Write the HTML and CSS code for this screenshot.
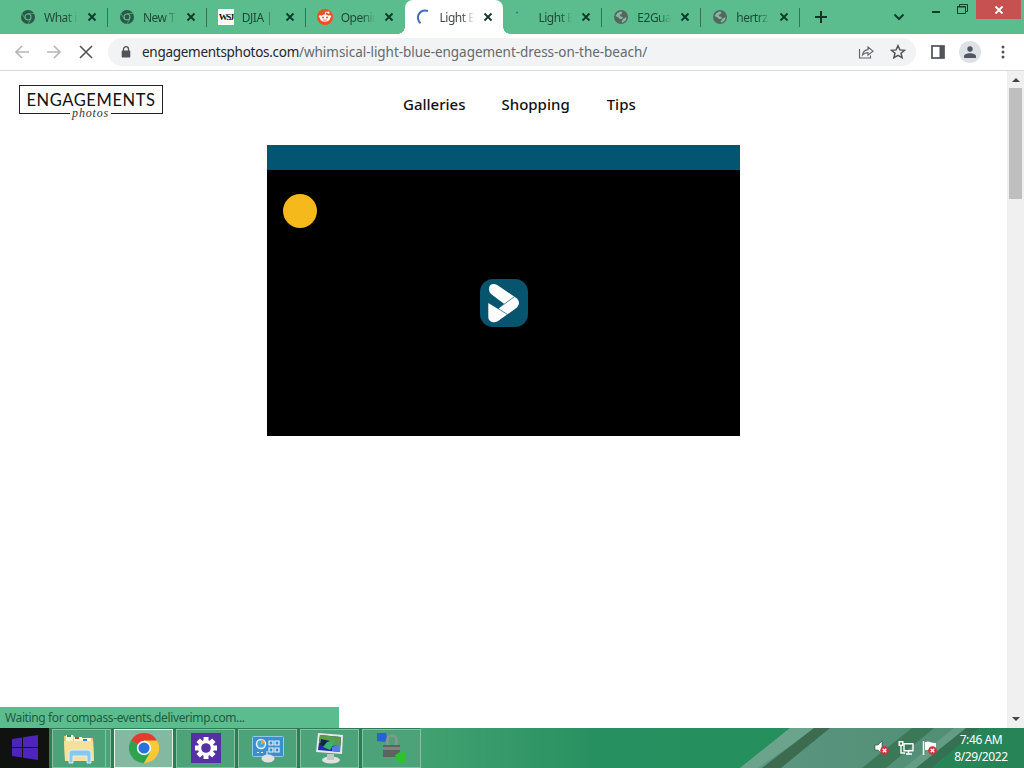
FILE: index.html
```
<!DOCTYPE html>
<html lang="en">
<head>
  <meta charset="UTF-8" />
  <meta name="viewport" content="width=device-width, initial-scale=1.0"/>
  <title>Light Blue Engagement Dress on the Beach</title>
  <link rel="stylesheet" href="styles.css">
</head>
<body>
  <svg class="defs" width="0" height="0">
    <symbol id="close" viewBox="0 0 10 10"><path d="M1.5 1.5l7 7M8.5 1.5l-7 7" stroke="currentColor" stroke-width="1.8"/></symbol>
    <symbol id="chromeGray" viewBox="0 0 16 16">
      <circle cx="8" cy="8" r="7" fill="#2c5746"/>
      <path d="M8 4.6h6.2M5 9.7L2 4.6M11 9.7L8 15" stroke="#5bbd8e" stroke-width=".7"/>
      <circle cx="8" cy="8" r="3.5" fill="#5bbd8e"/>
      <circle cx="8" cy="8" r="2.4" fill="#2c5746"/>
    </symbol>
    <symbol id="globe" viewBox="0 0 16 16">
      <circle cx="8" cy="8" r="7" fill="#55665f"/>
      <path d="M2.500 7l2-3 3-1.500 2 .5-1 2-2 1 1 1.500 2.500.5-1 2H7L5.500 8.500zM10 10l3.500-2-.5 3-3 2.500-1.500-.5z" fill="#86b8a0"/>
    </symbol>
    <symbol id="badge" viewBox="0 0 10 10"><circle cx="5" cy="5" r="4.8" fill="#d3303b"/><path d="M3 3l4 4M7 3L3 7" stroke="#fff" stroke-width="1.4"/></symbol>
  </svg>

  <header class="tab-strip">
    <div class="tabs">
      <div class="tab"><svg class="favicon"><use href="#chromeGray"/></svg><span class="title">What i</span><svg class="x"><use href="#close"/></svg></div>
      <div class="tab"><svg class="favicon"><use href="#chromeGray"/></svg><span class="title">New T</span><svg class="x"><use href="#close"/></svg></div>
      <div class="tab"><span class="favicon wsj">WSJ</span><span class="title">DJIA |</span><svg class="x"><use href="#close"/></svg></div>
      <div class="tab no-line">
        <svg class="favicon" viewBox="0 0 16 16">
          <circle cx="8" cy="8" r="8" fill="#f04e23"/>
          <path d="M8 6l.8-3 2.4.6" fill="none" stroke="#fff" stroke-width=".9"/>
          <circle cx="11.5" cy="3.6" r="1.1" fill="#fff"/><circle cx="3.2" cy="7.6" r="1.4" fill="#fff"/><circle cx="12.8" cy="7.6" r="1.4" fill="#fff"/>
          <ellipse cx="8" cy="9.2" rx="5" ry="3.6" fill="#fff"/>
          <circle cx="6" cy="8.4" r="1" fill="#f04e23"/><circle cx="10" cy="8.4" r="1" fill="#f04e23"/>
          <path d="M6 10.8q2 1.2 4 0" fill="none" stroke="#f04e23" stroke-width=".8"/>
        </svg>
        <span class="title">Openin</span><svg class="x"><use href="#close"/></svg>
      </div>
      <div class="tab active">
        <svg class="favicon" viewBox="0 0 16 16"><path d="M4.6 14.2A7.2 7.2 0 0 1 12 2" fill="none" stroke="#3d6fc4" stroke-width="2"/></svg>
        <span class="title">Light E</span><svg class="x"><use href="#close"/></svg>
      </div>
      <div class="tab"><svg class="favicon" viewBox="0 0 16 16"><circle cx="3" cy="3.500" r="1" fill="#2a72b0"/></svg><span class="title">Light E</span><svg class="x"><use href="#close"/></svg></div>
      <div class="tab"><svg class="favicon"><use href="#globe"/></svg><span class="title">E2Gua</span><svg class="x"><use href="#close"/></svg></div>
      <div class="tab"><svg class="favicon"><use href="#globe"/></svg><span class="title">hertrz</span><svg class="x"><use href="#close"/></svg></div>
    </div>
    <svg class="new-tab" viewBox="0 0 12 12"><path d="M6 0v12M0 6h12" stroke="#123528" stroke-width="2"/></svg>
    <svg class="chevron" viewBox="0 0 12 8"><path d="M1.500 1.500l4.500 4.500 4.500-4.500" fill="none" stroke="#123d2b" stroke-width="2"/></svg>
    <div class="window-btns">
      <svg class="minimize" viewBox="0 0 8 2"><rect width="8" height="2" fill="#143d2b"/></svg>
      <svg class="restore" viewBox="0 0 11 10"><path d="M2.5 2V.5h8v7H9M.5 2.5h8v7h-8zM.5 3h8" fill="none" stroke="#143d2b"/></svg>
      <div class="win-close"><svg width="10" height="10"><use href="#close"/></svg></div>
    </div>
  </header>

  <div class="toolbar">
    <svg class="nav" viewBox="0 0 16 16"><path d="M15 8H2M8 2L2 8l6 6" fill="none" stroke="#b4b6b8" stroke-width="1.6"/></svg>
    <svg class="nav" viewBox="0 0 16 16"><path d="M1 8h13M8 2l6 6-6 6" fill="none" stroke="#b4b6b8" stroke-width="1.6"/></svg>
    <svg class="nav" viewBox="0 0 16 16"><path d="M2 2l12 12M14 2L2 14" stroke="#505357" stroke-width="1.6"/></svg>
    <div class="omnibox">
      <svg class="lock" viewBox="0 0 10 12"><path d="M2.5 5V3.2a2.5 2.5 0 0 1 5 0V5" fill="none" stroke="#505357" stroke-width="1.3"/><rect x=".7" y="4.5" width="8.6" height="7" rx="1" fill="#505357"/></svg>
      <span class="host">engagementsphotos.com</span><span class="path">/whimsical-light-blue-engagement-dress-on-the-beach/</span>
      <svg class="share" viewBox="0 0 16 16"><path d="M1.5 5v9h11v-2.5M4.5 11C5 7 7 5.8 10 5.6V3l5 4.2-5 4V8.6C7.500 8.600 6 9.300 4.500 11z" fill="none" stroke="#5f6368" stroke-width="1.1"/></svg>
      <svg class="star" viewBox="0 0 16 16"><path d="M8 1.700l1.900 4.200 4.600.4-3.500 3 1.100 4.500L8 11.400l-4.100 2.400L5 9.300l-3.500-3 4.600-.4z" fill="none" stroke="#505357" stroke-width="1.5"/></svg>
    </div>
    <svg class="side-panel" viewBox="0 0 14 14"><rect x="1" y="1" width="12" height="12" fill="none" stroke="#505357" stroke-width="1.7"/><rect x="8.500" y="1" width="4.500" height="12" fill="#505357"/></svg>
    <div class="profile"><svg width="12" height="12" viewBox="0 0 12 12"><circle cx="6" cy="3" r="2.700" fill="#505763"/><path d="M0 12v-1.800C0 8.200 3 7.200 6 7.200s6 1 6 3V12z" fill="#505763"/></svg></div>
    <svg class="dots" viewBox="0 0 4 14"><g fill="#505357"><circle cx="2" cy="2" r="1.500"/><circle cx="2" cy="7" r="1.500"/><circle cx="2" cy="12" r="1.500"/></g></svg>
  </div>

  <div class="viewport">
    <main class="page">
      <div class="page-header">
        <div class="logo">
          <span class="logo-main">ENGAGEMENTS</span>
          <span class="logo-sub">photos</span>
        </div>
        <nav class="menu">
          <a>Galleries</a>
          <a>Shopping</a>
          <a>Tips</a>
        </nav>
      </div>
      <div class="video">
        <div class="video-bar"></div>
        <div class="video-body">
          <div class="dot"></div>
          <svg class="play" viewBox="0 0 48 48">
            <rect width="48" height="48" rx="13" fill="#07546f"/>
            <path d="M9 10Q9 5 14 5Q16 5 18 6.500L37 19.500Q41 24 37 28.500L18 42Q15 44 12 43Q8.300 41.500 8.300 38V24L18 30L24 24.800L11 15Q9 13 9 10z" fill="#fff"/>
            <path d="M18 29.500L34 18M18 29.500L27.500 35.500" stroke="#07546f" stroke-width=".7"/>
          </svg>
        </div>
      </div>
      <div class="status">Waiting for compass-events.deliverimp.com...</div>
    </main>
    <div class="scrollbar">
      <svg class="arrow" viewBox="0 0 8 5"><path d="M0 5l4-4 4 4z" fill="#444"/></svg>
      <div class="thumb"></div>
      <svg class="arrow down" viewBox="0 0 8 5"><path d="M0 0l4 4 4-4z" fill="#444"/></svg>
    </div>
  </div>

  <footer class="taskbar">
    <svg class="wallpaper" viewBox="0 0 604 40" preserveAspectRatio="none">
      <defs>
        <linearGradient id="wall"><stop offset="0" stop-color="#42a171"/><stop offset=".3" stop-color="#279060"/><stop offset="1" stop-color="#238d59"/></linearGradient>
        <linearGradient id="streak"><stop offset="0" stop-color="#5c9782"/><stop offset="1" stop-color="#4d8b70"/></linearGradient>
      </defs>
      <rect width="604" height="40" fill="url(#wall)"/>
      <path d="M320 40L370 0H604V40z" fill="url(#streak)"/>
      <path d="M320 40L370 0h26L338 40z" fill="#6ba38c"/>
      <path d="M342 40L394 0h16L361 40z" fill="#3c6b50"/>
      <path d="M442 40L492 0h22L466 40z" fill="#3b7858"/>
      <path d="M484 40L534 0h22L500 40z" fill="#649d83"/>
      <path d="M496 40L546 0h14L512 40z" fill="#347052"/>
      <path d="M512 40L560 0h44v40z" fill="#268457"/>
    </svg>
    <div class="start"><svg width="28" height="26" viewBox="0 0 28 26"><path d="M1 4l10-1.500V12H1zM12 2.300L27 0v12H12zM1 13h10v9.500L1 21zM12 13h15v12l-15-2.300z" fill="#4d25b8"/></svg></div>
    <div class="tasks">
      <div class="task stacked">
        <svg width="32" height="32" viewBox="0 0 32 32">
          <path d="M1 4l9-1 2 3h18l1 22H2z" fill="#e8cb76"/><path d="M3 3h7v6H3zM11 5h8v5h-8zM19 6h9v5h-9z" fill="#fff7d6"/>
          <path d="M4 3h4v2H4z" fill="#2f9b4c"/><path d="M12 5h4v2h-4z" fill="#cf4425"/><path d="M20 7h4v2h-4z" fill="#3a7dd0"/>
          <path d="M1 9h29l1 20H2z" fill="#f5e19a"/>
          <path d="M6 31V21q0-3 3-3h16q3 0 3 3v10h-4v-7H10v7z" fill="#87c8ed" stroke="#d8f1fc"/>
        </svg>
      </div>
      <div class="task current">
        <svg width="30" height="30" viewBox="0 0 30 30">
          <path d="M15 15L2 7.500A15 15 0 0 1 28 7.500z" fill="#e23c30"/>
          <path d="M15 15L2 7.500A15 15 0 0 0 15 30l7-11z" fill="#2da34e"/>
          <path d="M15 15l6.500 3.500L15 30A15 15 0 0 0 28 7.500H15z" fill="#fcc934"/>
          <circle cx="15" cy="15" r="7.200" fill="#fff"/><circle cx="15" cy="15" r="5.600" fill="#2b72e0"/>
        </svg>
      </div>
      <div class="task">
        <svg width="30" height="30" viewBox="0 0 30 30">
          <rect width="30" height="30" fill="#5531a5"/>
          <g stroke="#fff" stroke-width="5"><path d="M15 4v22M4 15h22M7.200 7.200l15.600 15.600M22.800 7.200L7.200 22.800"/></g>
          <circle cx="15" cy="15" r="8" fill="#fff"/><circle cx="15" cy="15" r="4.800" fill="#5531a5"/>
        </svg>
      </div>
      <div class="task">
        <svg width="32" height="30" viewBox="0 0 32 30">
          <rect x=".5" y="3.500" width="31" height="20" rx="1" fill="#3b8fce" stroke="#8fc8ec"/>
          <circle cx="9" cy="11" r="4.500" fill="#4aa5da" stroke="#e5f4fc" stroke-width="1.500"/><path d="M9 11V6.500A4.500 4.500 0 0 1 13 10z" fill="#f6a13c"/>
          <g fill="none" stroke="#e5f4fc" stroke-width="1.200"><path d="M17 8h4v4h-4zM23 8h4v4h-4zM17 15h4v4h-4zM23 15h4v4h-4zM5 19.500h2M9 19.500h2"/></g>
          <ellipse cx="16" cy="25.500" rx="6.500" ry="4" fill="#dfe2e0"/><path d="M15 18v5" stroke="#eee"/>
        </svg>
      </div>
      <div class="task">
        <svg width="30" height="32" viewBox="0 0 30 32">
          <ellipse cx="16" cy="28" rx="9" ry="3.500" fill="#dfe3df"/><path d="M12 22h7v6h-7z" fill="#c2c8c4"/>
          <path d="M3 1l25 2-1 19L1 20z" fill="#e5e9e5"/><path d="M5 3l21 2-1 15L3 18z" fill="#1c2fae"/>
          <path d="M5 3l21 2-.5 8L17 14 4 11z" fill="#5b9c4c"/><path d="M6 7l9 2-4 6-6-2z" fill="#14264f"/><path d="M12 10l7-2-1 5-3 5-7-3z" fill="#37b568"/><path d="M17 15l8-3v8l-8-1z" fill="#4f80e0"/>
        </svg>
      </div>
      <div class="task">
        <svg width="32" height="32" viewBox="0 0 32 32">
          <path d="M1 1h9l1 4-2 5-8-1z" fill="#2862d2"/><path d="M11.500 14V8q0-4.500 4.500-4.500T20.500 8v6" fill="none" stroke="#8b948d" stroke-width="2.600"/>
          <rect x="7" y="13" width="17" height="12" fill="#5c6460"/><path d="M7 15h17v3H7z" fill="#7d8580"/>
          <path d="M19 23l5-3v2l6-3v9q-4 5-8 2z" fill="#2cc426"/>
        </svg>
      </div>
    </div>
    <div class="tray">
      <svg width="16" height="16" viewBox="0 0 16 16"><path d="M1 5h3l4-4v13l-4-4H1z" fill="#fff" stroke="#234b38" stroke-width=".6"/><use href="#badge" x="6" y="6" width="9" height="9"/></svg>
      <svg width="16" height="16" viewBox="0 0 16 16"><g fill="none" stroke="#fff" stroke-width="1.400"><path d="M6 3.700h9v7H6zM8 14h6M10.500 11v3M3 5v8h4"/><rect x="1.200" y="1.700" width="3.600" height="3.600"/></g></svg>
      <svg width="16" height="16" viewBox="0 0 16 16"><path d="M1.500 1v14" stroke="#fff" stroke-width="1.500"/><path d="M3 2q3-1 5 0t6 1v7H3z" fill="#fff"/><use href="#badge" x="6" y="6" width="9" height="9"/></svg>
    </div>
    <div class="clock"><span>7:46 AM</span><span>8/29/2022</span></div>
  </footer>
</body>
</html>
```
FILE: styles.css
```
:root {
  --green: #5bbd8e;
  --icon: #505357;
}

* {
  box-sizing: border-box;
}

body {
  margin: 0;
  width: 1024px;
  height: 768px;
  overflow: hidden;
  display: flex;
  flex-direction: column;
  background: #fff;
  font-family: "Noto Sans", "Open Sans", sans-serif;
}

svg {
  flex-shrink: 0;
}

.defs {
  position: absolute;
}

/* tabs */
.tab-strip {
  height: 34px;
  flex-shrink: 0;
  background: var(--green);
  display: flex;
  align-items: center;
  padding-left: 9px;
}

.tabs {
  display: flex;
  align-self: stretch;
}

.tab {
  width: 98.9px;
  height: 34px;
  padding-left: 11px;
  display: flex;
  align-items: center;
  color: #1d4a37;
  background: linear-gradient(#2f7756, #2f7756) right 0 top 8px / 1px 19px no-repeat;
}

.tab.no-line {
  background: none;
}

.tab.active {
  position: relative;
  background: #fff;
  border-radius: 8px 8px 0 0;
  color: #45484c;
}

.tab.active::before,
.tab.active::after {
  content: '';
  position: absolute;
  bottom: 0;
  width: 7px;
  height: 7px;
}

.tab.active::before {
  left: -7px;
  background: radial-gradient(circle at 0 0, transparent 6.5px, #fff 7px);
}

.tab.active::after {
  right: -7px;
  background: radial-gradient(circle at 100% 0, transparent 6.5px, #fff 7px);
}

.favicon {
  width: 16px;
  height: 16px;
}

.wsj {
  background: #fff;
  color: #111;
  font: bold 9px/16px "Liberation Serif", serif;
  letter-spacing: -1.4px;
  text-align: center;
}

.title {
  width: 36px;
  margin-left: 8px;
  white-space: nowrap;
  font-size: 12px;
  letter-spacing: -0.5px;
  -webkit-mask-image: linear-gradient(90deg, #000 60%, transparent 95%);
  mask-image: linear-gradient(90deg, #000 60%, transparent 95%);
}

.x {
  width: 10px;
  height: 10px;
  margin-left: 7px;
  color: #12382a;
}

.new-tab {
  width: 12px;
  height: 12px;
  margin-left: 15px;
}

.chevron {
  width: 12px;
  height: 8px;
  margin-left: 66px;
}

.window-btns {
  display: flex;
  align-self: flex-start;
  align-items: flex-start;
  margin-left: auto;
  padding-right: 3px;
}

.minimize {
  width: 8px;
  height: 2px;
  margin-top: 11px;
}

.restore {
  width: 11px;
  height: 10px;
  margin: 4px 8px 0 17px;
}

.win-close {
  width: 45px;
  height: 19px;
  display: flex;
  align-items: center;
  justify-content: center;
  background: #c75050;
  color: #fff;
}

/* toolbar */
.toolbar {
  height: 37px;
  flex-shrink: 0;
  display: flex;
  align-items: center;
  padding: 0 19px 0 14px;
  border-bottom: 1px solid #d9dadb;
}

.nav {
  width: 16px;
  height: 16px;
  margin-right: 16px;
}

.omnibox {
  width: 808px;
  height: 28px;
  margin-left: -2px;
  padding: 0 10px 0 13px;
  display: flex;
  align-items: center;
  border-radius: 14px;
  background: #f1f3f4;
  font-size: 13.5px;
  white-space: nowrap;
}

.lock {
  width: 10px;
  height: 12px;
  margin-right: 11px;
}

.host {
  width: 157px;
  letter-spacing: -0.28px;
  color: #25282b;
}

.path {
  letter-spacing: -0.04px;
  color: #66696d;
}

.share {
  width: 16px;
  height: 16px;
  margin-left: auto;
  margin-right: 16px;
}

.star {
  width: 16px;
  height: 16px;
}

.side-panel {
  width: 14px;
  height: 14px;
  margin-left: 15px;
}

.profile {
  width: 22px;
  height: 22px;
  margin-left: 14px;
  display: flex;
  align-items: center;
  justify-content: center;
  border-radius: 50%;
  background: #dee1e6;
}

.dots {
  width: 4px;
  height: 14px;
  margin-left: auto;
}

/* page */
.viewport {
  flex: 1;
  display: flex;
}

.page {
  flex: 1;
  display: flex;
  flex-direction: column;
}

.page-header {
  height: 74px;
  padding: 14px 19px;
  display: flex;
}

.logo {
  width: 144px;
  height: 29px;
  border: 1.5px solid #222;
  text-align: center;
}

.logo-main {
  display: block;
  height: 21px;
  font: 16.5px/28px Lato, sans-serif;
  letter-spacing: 0.6px;
  color: #111;
}

.logo-sub {
  display: block;
  width: 41px;
  margin-left: 50px;
  background: linear-gradient(#fff, #fff) 0 5px / 100% 4px no-repeat;
  font: italic 12px/13px "Liberation Serif", serif;
  letter-spacing: 0.8px;
  color: #333;
}

.menu {
  display: flex;
  gap: 36px;
  margin-left: 240px;
  font-size: 15px;
  line-height: 38px;
  font-weight: 500;
  color: #111;
}

.menu a:last-child {
  padding-left: 1px;
}

.video {
  width: 473px;
  height: 291px;
  margin-left: 267px;
  background: #000;
}

.video-bar {
  height: 25px;
  background: #045572;
}

.video-body {
  display: flex;
  padding: 24px 16px;
}

.dot {
  width: 34px;
  height: 34px;
  border-radius: 50%;
  background: #f5b91b;
}

.play {
  width: 48px;
  height: 48px;
  margin: 85px 0 0 163px;
}

.status {
  width: 339px;
  height: 21px;
  margin-top: auto;
  padding-left: 5px;
  background: var(--green);
  color: #1e5c40;
  font-size: 12px;
  line-height: 22px;
  letter-spacing: -0.38px;
}

.scrollbar {
  width: 17px;
  display: flex;
  flex-direction: column;
  align-items: center;
  background: #f0f0f0;
}

.arrow {
  width: 8px;
  height: 5px;
  margin: 6px 0;
}

.thumb {
  width: 13px;
  height: 111px;
  background: #bfbfbf;
}

.down {
  margin-top: auto;
}

/* taskbar */
.taskbar {
  position: relative;
  height: 40px;
  flex-shrink: 0;
  display: flex;
  align-items: center;
  background: #2c7d55;
}

.wallpaper {
  position: absolute;
  left: 420px;
  top: 0;
  width: 604px;
  height: 40px;
}

.start {
  width: 49px;
  height: 40px;
  display: flex;
  align-items: center;
  justify-content: center;
  background: #10120f;
}

.tasks {
  position: relative;
  display: flex;
  gap: 3px;
  margin-left: 3px;
}

.task {
  width: 59px;
  height: 39px;
  display: flex;
  align-items: center;
  justify-content: center;
  background: #4ca379;
  border: 1px solid #83c3a2;
}

.stacked {
  padding-right: 5px;
  background: linear-gradient(#83c3a2, #83c3a2) right 4px top 0 / 1px 100% no-repeat, #4ca379;
}

.current {
  background: #83b9a0;
  border: 1px solid #e4f5ea;
}

.tray {
  position: relative;
  display: flex;
  gap: 8px;
  margin-left: auto;
  margin-right: 16px;
}

.clock {
  position: relative;
  width: 54px;
  margin-right: 16px;
  display: flex;
  flex-direction: column;
  align-items: center;
  color: #fff;
  font-size: 12px;
  line-height: 17px;
  letter-spacing: -0.4px;
}
```
